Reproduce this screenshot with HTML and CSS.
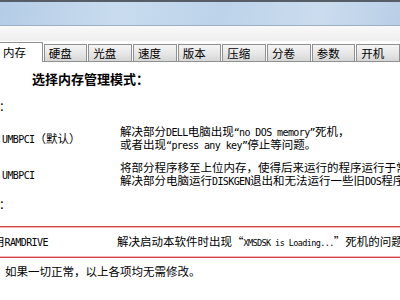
FILE: index.html
```html
<!DOCTYPE html>
<html lang="zh-CN">
<head>
  <meta charset="UTF-8" />
  <title>内存设置</title>
  <link rel="stylesheet" href="styles.css">
</head>
<body>
  <div class="titlebar"></div>
  <div class="band"></div>

  <div class="tabs">
    <div class="tab active">内存</div>
    <div class="tab">硬盘</div>
    <div class="tab">光盘</div>
    <div class="tab">速度</div>
    <div class="tab">版本</div>
    <div class="tab">压缩</div>
    <div class="tab">分卷</div>
    <div class="tab">参数</div>
    <div class="tab">开机</div>
  </div>

  <div class="content">
    <div class="title">选择内存管理模式：</div>

    <div class="row row-a">
      <div class="label colon">：</div>
    </div>

    <div class="row row-b">
      <div class="label"><span class="en">UMBPCI</span>（默认）</div>
      <div class="desc">
        <div class="line">解决部分<span class="en">DELL</span>电脑出现<span class="en">“no DOS memory”</span>死机，</div>
        <div class="line">或者出现<span class="en">“press any key”</span>停止等问题。</div>
      </div>
    </div>

    <div class="row row-c">
      <div class="label"><span class="en">UMBPCI</span></div>
      <div class="desc">
        <div class="line">将部分程序移至上位内存，使得后来运行的程序运行于常规内存</div>
        <div class="line">解决部分电脑运行<span class="en">DISKGEN</span>退出和无法运行一些旧<span class="en">DOS</span>程序的问题</div>
      </div>
    </div>

    <div class="row row-d">
      <div class="label colon">：</div>
    </div>

    <div class="row boxed">
      <div class="label cut">用<span class="en">RAMDRIVE</span></div>
      <div class="desc">解决启动本软件时出现“<span class="en sm">XMSDSK is Loading...</span>”死机的问题</div>
    </div>

    <div class="note">如果一切正常，以上各项均无需修改。</div>
  </div>
</body>
</html>
```

FILE: styles.css
```css
body {
  margin: 0;
  width: 400px;
  height: 300px;
  overflow: hidden;
  background: #fff;
  color: #000;
  font-family: "Noto Sans CJK SC", sans-serif;
  font-size: 11.5px;
}

.titlebar {
  height: 23px;
  border-top: 2px solid #565d66;
  border-bottom: 1px solid #9cb0c4;
  background: linear-gradient(100deg, #b4cce6 0%, #c9dcef 30%, #bcd3ea 55%, #cbdcee 80%, #b9cfe7 100%);
}

.band {
  height: 15px;
  background: linear-gradient(#f9f9f9, #eeeeee);
}

.tabs {
  display: flex;
  align-items: flex-end;
  gap: 1px;
  height: 20px;
  border-bottom: 1px solid #8f9090;
}

.tab {
  box-sizing: border-box;
  width: 44px;
  height: 17px;
  padding: 1px 0 0 4px;
  line-height: 15px;
  font-size: 11.5px;
  border: 1px solid #8f9090;
  border-bottom: none;
  background: linear-gradient(#f5f5f5, #e6e6e6 55%, #d6d6d6);
  white-space: nowrap;
}

.tab.active {
  width: 43px;
  height: 20px;
  margin-bottom: -1px;
  padding: 2px 0 0 3px;
  border-left: none;
  background: #fff;
}

.content {
  white-space: nowrap;
  overflow: hidden;
}

.title {
  margin-top: 9px;
  padding-left: 32px;
  height: 16px;
  line-height: 16px;
  font-size: 13px;
  font-weight: bold;
}

.row {
  display: flex;
  align-items: center;
}

.label,
.line,
.boxed .desc {
  height: 12px;
  line-height: 12px;
}

.line {
  height: 12.5px;
}

.label {
  width: 118px;
  padding-left: 2px;
  flex-shrink: 0;
}

.label.colon {
  margin-left: -3px;
}

.row-a { margin-top: 13px; }
.row-b { margin-top: 13px; }
.row-c { margin-top: 11px; }
.row-d { margin-top: 12px; }

.boxed {
  margin-top: 16px;
  height: 28px;
  border-top: 1px solid #d6414b;
  border-bottom: 1px solid #d6414b;
  box-shadow: inset 0 1px 0 #f2b3b7, inset 0 -1px 0 #f2b3b7;
  padding: 0 0 2px;
}

.label.cut {
  width: 117px;
  margin-left: -7px;
  padding-left: 0;
  padding-right: 7px;
}

.en {
  font-family: "DejaVu Sans Mono", monospace;
  font-size: 10px;
  letter-spacing: -0.6px;
  line-height: 0;
}

.en.sm {
  font-size: 8.5px;
}

.note {
  margin-top: 7px;
  padding-left: 5px;
  height: 12px;
  line-height: 12px;
}
```
